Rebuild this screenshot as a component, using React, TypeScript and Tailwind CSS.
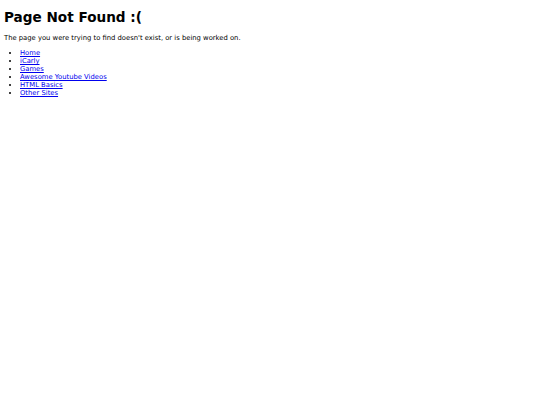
export default function App() {
  const links = [
    "Home",
    "iCarly",
    "Games",
    "Awesome Youtube Videos",
    "HTML Basics",
    "Other Sites",
  ];

  return (
    <div className="min-h-[405px] bg-white px-[4px] py-[1px] text-black font-['DejaVu_Sans',sans-serif]">
      <h1 className="mt-[8px] mb-[9px] text-[13.6px] leading-[16px] font-bold">
        Page Not Found :(
      </h1>
      <p className="mb-[7px] text-[6.8px] leading-[8px]">
        The page you were trying to find doesn't exist, or is being worked on.
      </p>
      <ul className="list-disc pl-[16px] text-[6.8px] leading-[8px]">
        {links.map((l) => (
          <li key={l}>
            <a href="#" className="text-[#0000ee] underline">
              {l}
            </a>
          </li>
        ))}
      </ul>
    </div>
  );
}
